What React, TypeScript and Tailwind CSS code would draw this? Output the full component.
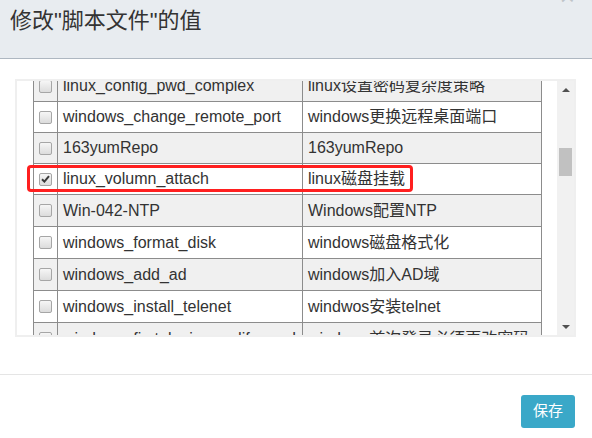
import React from "react";

type Row = { name: string; value: string; h: string; checked?: boolean };

const rows: Row[] = [
    { name: "linux_config_pwd_complex", value: "linux设置密码复杂度策略", h: "h-[31px]" },
    { name: "windows_change_remote_port", value: "windows更换远程桌面端口", h: "h-[31px]" },
    { name: "163yumRepo", value: "163yumRepo", h: "h-[31px]" },
    { name: "linux_volumn_attach", value: "linux磁盘挂载", h: "h-[31px]", checked: true },
    { name: "Win-042-NTP", value: "Windows配置NTP", h: "h-[32px]" },
    { name: "windows_format_disk", value: "windows磁盘格式化", h: "h-[32px]" },
    { name: "windows_add_ad", value: "windows加入AD域", h: "h-[32px]" },
    { name: "windows_install_telenet", value: "windwos安装telnet", h: "h-[32px]" },
    { name: "windows_first_login_modify_pwd", value: "windows首次登录必须更改密码", h: "h-[32px]" },
];

// 古いChrome風のグレーのチェックボックス
const Check = ({ checked }: { checked?: boolean }) => (
    <span className="w-[13px] h-[13px] rounded-[2px] border border-[#a6a6a6] bg-gradient-to-b from-[#f6f6f6] to-[#dcdcdc] flex items-center justify-center">
        {checked && (
            <svg width="9" height="8" viewBox="0 0 9 8">
                <path d="M1 4.2 L3.4 6.6 L8 1.2" fill="none" stroke="#3a3a3a" strokeWidth="2" />
            </svg>
        )}
    </span>
);

export default function App() {
    const font = "font-['Liberation_Sans','Noto_Sans_CJK_SC',sans-serif]";
    return (
        <div className={`w-[592px] h-[438px] bg-white overflow-hidden text-[#333] ${font}`}>
            {/* ヘッダー */}
            <div className="relative h-[59px] bg-[#e8ecf0] border-b border-[#aeb7c1] px-[10px] pt-[6px]">
                <div className="text-[22px] leading-[30px] text-[#333]">修改"脚本文件"的值</div>
                <span className="absolute right-[17px] top-[-17px] text-[26px] leading-[26px] text-[#bfc4c9]">×</span>
            </div>

            {/* 本体 */}
            <div className="h-[315px] pt-[20px] px-[15px] pr-[16px]">
                <div className="flex h-[258px] border-2 border-[#efefef]">
                    <div className="relative flex-1 overflow-hidden pl-[16px]">
                        <div className="-mt-[10px] w-[509px] border-l border-[#8c8c8c] text-[16px]">
                            {rows.map((r, i) => (
                                <div
                                    key={r.name}
                                    className={`flex border-b border-[#8c8c8c] ${r.h} ${i % 2 === 0 ? "bg-[#f0f0f0]" : "bg-white"}`}
                                >
                                    <div className="w-[24px] shrink-0 border-r border-[#8c8c8c] flex items-center justify-center">
                                        <Check checked={r.checked} />
                                    </div>
                                    <div className="w-[245px] shrink-0 border-r border-[#8c8c8c] pl-[5px] flex items-center whitespace-nowrap overflow-hidden">
                                        {r.name}
                                    </div>
                                    <div className="w-[239px] shrink-0 border-r border-[#8c8c8c] pl-[5px] flex items-center whitespace-nowrap overflow-hidden">
                                        {r.value}
                                    </div>
                                </div>
                            ))}
                        </div>
                        {/* 赤枠の強調 */}
                        <div className="absolute left-[10px] top-[84px] w-[386px] h-[27px] border-[3px] border-[#ff1f1f] rounded-[4px]"></div>
                    </div>

                    {/* スクロールバー */}
                    <div className="w-[17px] ml-[15px] bg-[#f1f1f1] flex flex-col items-center">
                        <svg width="8" height="4" viewBox="0 0 8 4" className="mt-[7px]">
                            <path d="M0 4 L4 0 L8 4 Z" fill="#505050" />
                        </svg>
                        <div className="mt-[56px] w-[13px] h-[28px] bg-[#c1c1c1]"></div>
                        <div className="flex-1"></div>
                        <svg width="8" height="4" viewBox="0 0 8 4" className="mb-[6px]">
                            <path d="M0 0 L8 0 L4 4 Z" fill="#505050" />
                        </svg>
                    </div>
                </div>
            </div>

            {/* フッター */}
            <div className="border-t border-[#e5e5e5] pt-[20px] pr-[17px] flex justify-end">
                <button className="w-[54px] h-[33px] rounded-[3px] bg-[#3aa8c8] text-white text-[15px]">保存</button>
            </div>
        </div>
    );
}
